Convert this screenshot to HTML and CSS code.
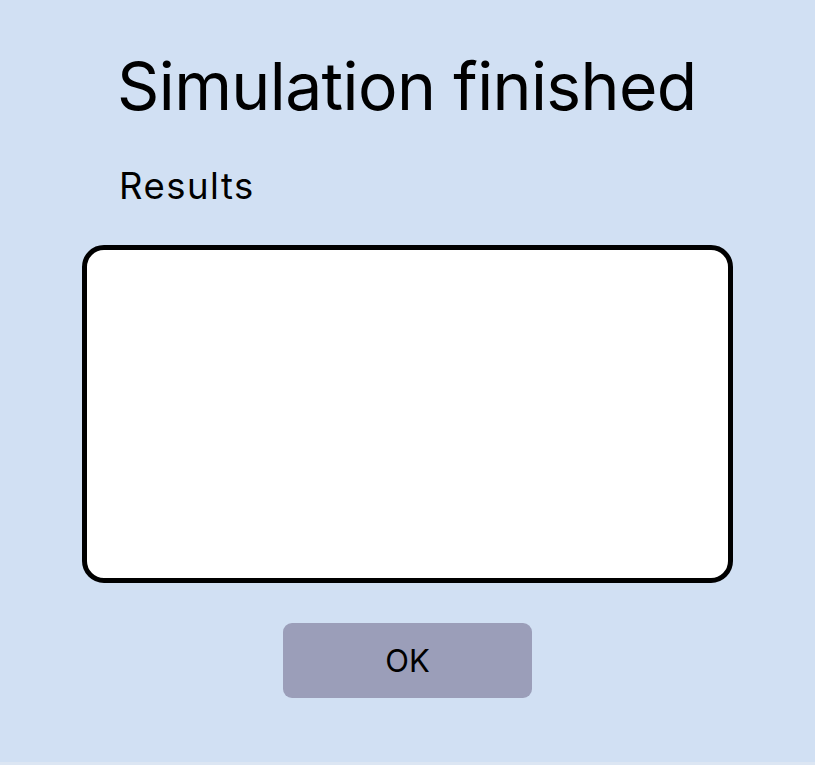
FILE: index.html
```html
<!DOCTYPE html>
<html>
<head>
<meta charset="utf-8">
<link rel="stylesheet" href="styles.css">
</head>
<body>
<div class="dialog">
  <h1 class="title">Simulation finished</h1>
  <div class="label">Results</div>
  <div class="results"></div>
  <div class="actions">
    <button class="ok">OK</button>
  </div>
</div>
</body>
</html>
```
FILE: styles.css
```css
html {
  margin: 0;
  padding: 0;
  background: #dce6f3;
}
body {
  margin: 0;
  padding: 0;
  background: #d1e0f3;
  font-family: Inter, "Noto Sans", sans-serif;
  color: #000;
  width: 815px;
  height: 762px;
  overflow: hidden;
}
.dialog {
  display: flex;
  flex-direction: column;
  padding: 46px 82px 0 82px;
  box-sizing: border-box;
}
.title {
  margin: 0 0 0 35px;
  font-size: 66px;
  font-weight: 400;
  line-height: 80px;
  letter-spacing: -0.6px;
}
.label {
  margin: 38px 0 0 37px;
  font-size: 36.5px;
  line-height: 44px;
  letter-spacing: 1.5px;
}
.results {
  margin-top: 37px;
  width: 651px;
  height: 338px;
  box-sizing: border-box;
  border: 5px solid #000;
  border-radius: 22px;
  background: #fff;
}
.actions {
  display: flex;
  justify-content: center;
  margin-top: 40px;
}
.ok {
  width: 249px;
  height: 75px;
  border: none;
  border-radius: 9px;
  background: #9b9eb9;
  font-family: Inter, "Noto Sans", sans-serif;
  font-size: 31px;
  color: #000;
  padding: 0;
}
```
